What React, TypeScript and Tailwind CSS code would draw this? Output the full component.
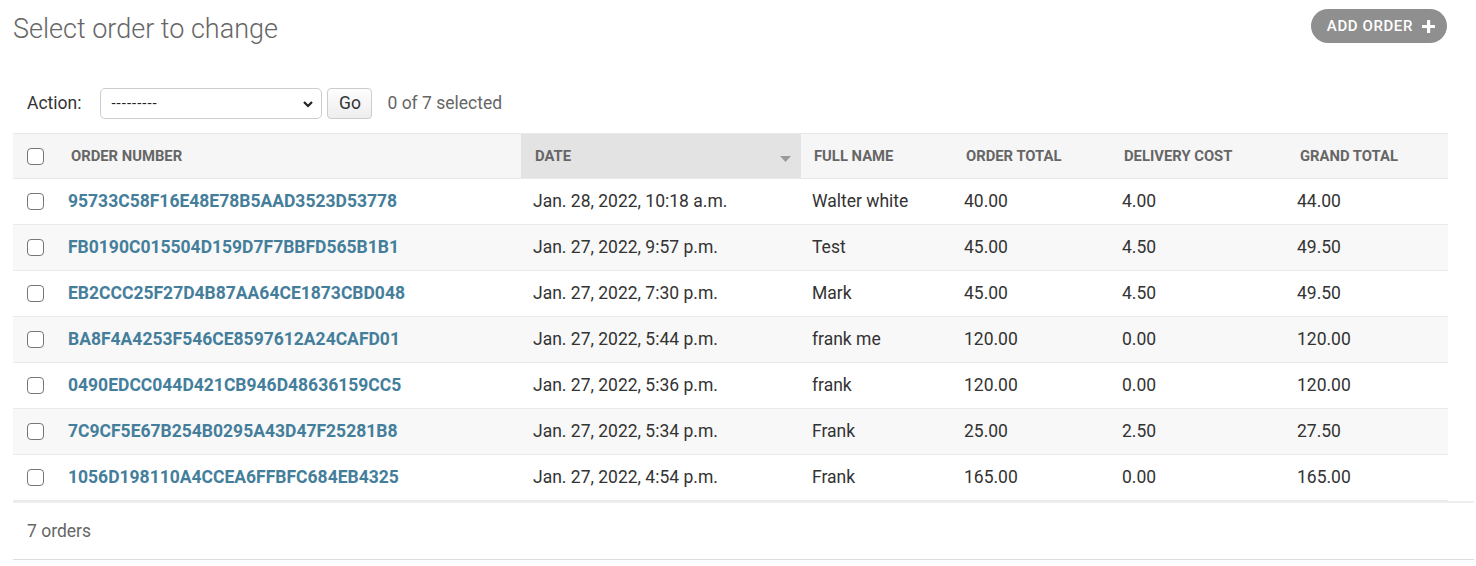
import React from "react";

type Order = {
    number: string;
    date: string;
    name: string;
    total: string;
    delivery: string;
    grand: string;
};

const orders: Order[] = [
    { number: "95733C58F16E48E78B5AAD3523D53778", date: "Jan. 28, 2022, 10:18 a.m.", name: "Walter white", total: "40.00", delivery: "4.00", grand: "44.00" },
    { number: "FB0190C015504D159D7F7BBFD565B1B1", date: "Jan. 27, 2022, 9:57 p.m.", name: "Test", total: "45.00", delivery: "4.50", grand: "49.50" },
    { number: "EB2CCC25F27D4B87AA64CE1873CBD048", date: "Jan. 27, 2022, 7:30 p.m.", name: "Mark", total: "45.00", delivery: "4.50", grand: "49.50" },
    { number: "BA8F4A4253F546CE8597612A24CAFD01", date: "Jan. 27, 2022, 5:44 p.m.", name: "frank me", total: "120.00", delivery: "0.00", grand: "120.00" },
    { number: "0490EDCC044D421CB946D48636159CC5", date: "Jan. 27, 2022, 5:36 p.m.", name: "frank", total: "120.00", delivery: "0.00", grand: "120.00" },
    { number: "7C9CF5E67B254B0295A43D47F25281B8", date: "Jan. 27, 2022, 5:34 p.m.", name: "Frank", total: "25.00", delivery: "2.50", grand: "27.50" },
    { number: "1056D198110A4CCEA6FFBFC684EB4325", date: "Jan. 27, 2022, 4:54 p.m.", name: "Frank", total: "165.00", delivery: "0.00", grand: "165.00" },
];

function Checkbox() {
    return <span className="block h-[17px] w-[17px] rounded-[4px] border border-[#767676] bg-white" />;
}

export default function App() {
    return (
        <div className="min-h-[566px] bg-white pl-[13px] pr-[2px] font-['Roboto',sans-serif] text-[#333]">
            {/* title + add button */}
            <div className="mr-[27px] flex items-start justify-between pt-[9px]">
                <h1 className="pt-[3px] text-[27px] font-light leading-[34px] text-[#666]">Select order to change</h1>
                <button className="flex h-[34px] items-center gap-[9px] rounded-full bg-[#8f8f8f] pl-[16px] pr-[12px] text-[15px] font-medium tracking-[0.6px] text-white">
                    ADD ORDER
                    <svg width="13" height="13" viewBox="0 0 13 13" fill="white">
                        <rect x="5" y="0" width="3.2" height="13" rx="0.6" />
                        <rect x="0" y="4.9" width="13" height="3.2" rx="0.6" />
                    </svg>
                </button>
            </div>

            {/* actions */}
            <div className="mt-[42px] flex items-center pl-[14px] text-[17.5px]">
                <span className="mr-[19px] text-[#333]">Action:</span>
                <div className="flex h-[31px] w-[222px] items-center justify-between rounded-[5px] border border-[#ccc] bg-white pl-[10px] pr-[7px]">
                    <span className="text-[15px] leading-none tracking-[1px] text-[#222]">---------</span>
                    <svg width="12" height="12" viewBox="0 0 12 12" fill="none" stroke="#222" strokeWidth="2.2">
                        <path d="M2 4l4 4 4-4" />
                    </svg>
                </div>
                <button className="ml-[5px] h-[31px] w-[45px] rounded-[4px] border border-[#ccc] bg-gradient-to-b from-[#fdfdfd] to-[#eeeeee] text-[17.5px] text-[#333]">
                    Go
                </button>
                <span className="ml-[15px] text-[#666]">0 of 7 selected</span>
            </div>

            {/* results */}
            <div className="mt-[14px] border-b-2 border-[#eee]">
                <table className="w-[1435px] table-fixed border-collapse">
                    <colgroup>
                        <col className="w-[43px]" />
                        <col className="w-[465px]" />
                        <col className="w-[280px]" />
                        <col className="w-[151px]" />
                        <col className="w-[158px]" />
                        <col className="w-[175px]" />
                        <col className="w-[163px]" />
                    </colgroup>
                    <thead>
                        <tr className="h-[45px] border-t border-b border-[#e8e8e8] bg-[#f6f6f6] text-left text-[14.8px] font-bold text-[#666]">
                            <th className="pl-[14px]"><Checkbox /></th>
                            <th className="pl-[15px] font-bold">ORDER NUMBER</th>
                            <th className="bg-[#e3e3e3] pl-[14px] pr-[10px] font-bold">
                                <div className="flex items-center justify-between">
                                    <span>DATE</span>
                                    <svg width="11" height="6" viewBox="0 0 11 6" fill="#9a9a9a" className="mt-[5px]">
                                        <path d="M0 0h11L5.5 6z" />
                                    </svg>
                                </div>
                            </th>
                            <th className="pl-[13px] font-bold">FULL NAME</th>
                            <th className="pl-[14px] font-bold">ORDER TOTAL</th>
                            <th className="pl-[14px] font-bold">DELIVERY COST</th>
                            <th className="pl-[15px] font-bold">GRAND TOTAL</th>
                        </tr>
                    </thead>
                    <tbody>
                        {orders.map((o, i) => (
                            <tr key={o.number} className={`h-[46px] border-b border-[#eaeaea] text-[17.5px] ${i % 2 === 1 ? "bg-[#f8f8f8]" : "bg-white"}`}>
                                <td className="pl-[14px]"><Checkbox /></td>
                                <td className="pl-[12px]">
                                    <a className="font-bold text-[#447e9b]">{o.number}</a>
                                </td>
                                <td className="pl-[12px]">{o.date}</td>
                                <td className="pl-[11px]">{o.name}</td>
                                <td className="pl-[12px]">{o.total}</td>
                                <td className="pl-[12px]">{o.delivery}</td>
                                <td className="pl-[12px]">{o.grand}</td>
                            </tr>
                        ))}
                    </tbody>
                </table>
            </div>

            {/* paginator */}
            <div className="flex h-[57px] items-center border-b border-[#ddd] pl-[14px] text-[17.5px] text-[#666]">
                7 orders
            </div>
        </div>
    );
}
